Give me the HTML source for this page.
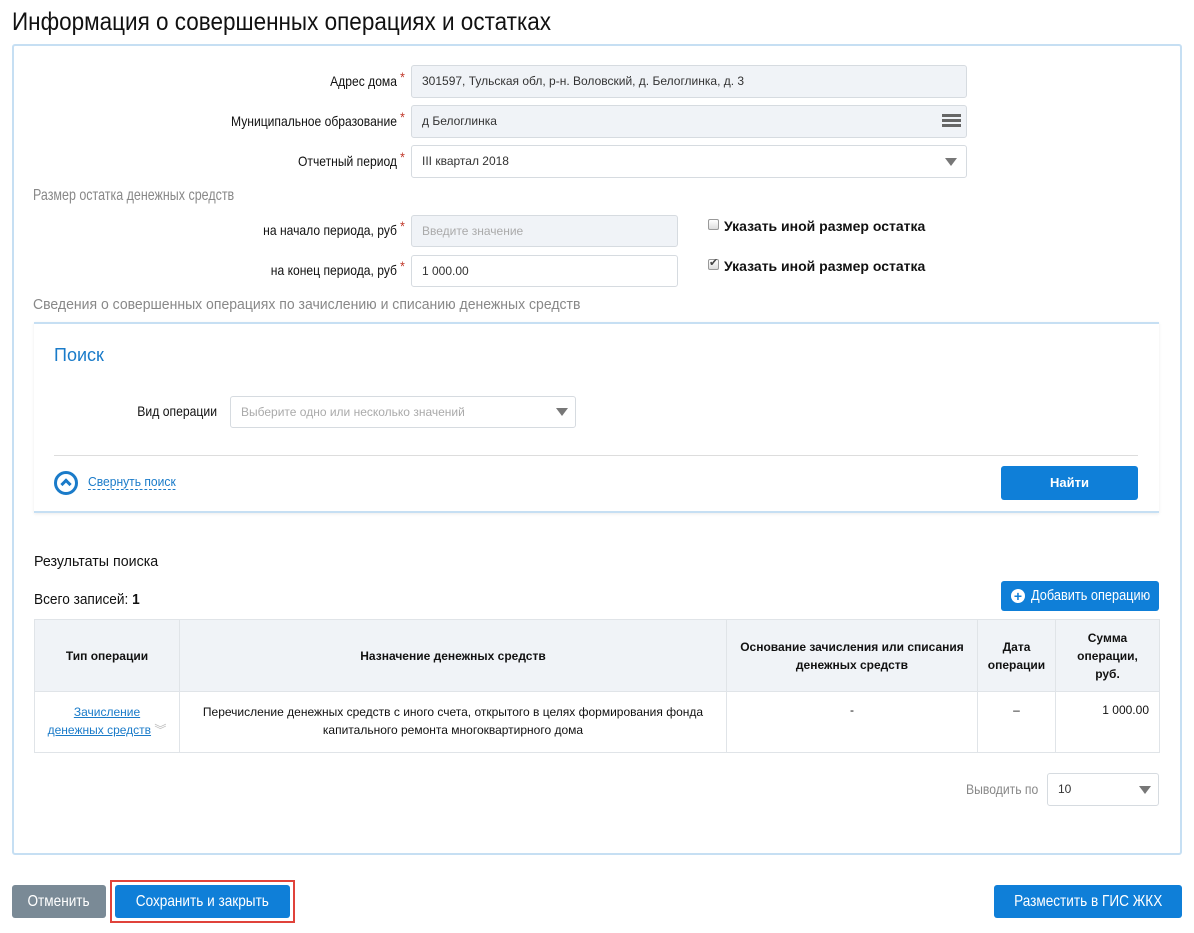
<!DOCTYPE html>
<html><head><meta charset="utf-8"><style>
*{box-sizing:border-box;margin:0;padding:0}
body{width:1194px;height:933px;background:#fff;position:relative;font-family:"Liberation Sans",sans-serif;color:#111;overflow:hidden}
.a{position:absolute;white-space:nowrap}
.lbl{position:absolute;text-align:right;font-size:14px;width:380px;transform:scaleX(.865);transform-origin:right center}
.lbl b{color:#c0392b;font-weight:normal;position:absolute;right:-9px;top:-4px}
.inp{position:absolute;border:1px solid #d6dbe0;border-radius:3px;font-size:12px;padding-left:10px;line-height:30px;color:#333}
.g{background:#f0f3f7}
.tri{position:absolute;width:0;height:0;border-left:6px solid transparent;border-right:6px solid transparent;border-top:8px solid #777}
.btn{position:absolute;background:#0f7fd8;color:#fff;border-radius:3px;text-align:center;font-size:14px;white-space:nowrap}
.cb{position:absolute;width:11px;height:11px;border:1px solid #999;border-radius:2px;background:linear-gradient(#fff,#ddd)}
.sx{display:inline-block;transform:scaleX(.85);font-size:16px}
td,th{border:1px solid #e0e4e8;font-size:12px;text-align:center;vertical-align:top}
th{background:#f0f3f7;vertical-align:middle;font-weight:bold}
</style></head><body>
<div class="a" style="left:12px;top:8px;font-size:25px;color:#111;transform:scaleX(.9);transform-origin:left">Информация о совершенных операциях и остатках</div>
<div class="a" style="left:12px;top:44px;width:1170px;height:811px;border:2px solid #c6dff3;border-radius:3px"></div>

<div class="lbl" style="left:17px;top:73px">Адрес дома<b>*</b></div>
<div class="inp g" style="left:411px;top:65px;width:556px;height:33px">301597, Тульская обл, р-н. Воловский, д. Белоглинка, д. 3</div>
<div class="lbl" style="left:17px;top:113px">Муниципальное образование<b>*</b></div>
<div class="inp g" style="left:411px;top:105px;width:556px;height:33px">д Белоглинка</div>
<div class="a" style="left:942px;top:114px;width:19px;height:3px;background:#666;box-shadow:0 5px 0 #666,0 10px 0 #666"></div>
<div class="lbl" style="left:17px;top:153px">Отчетный период<b>*</b></div>
<div class="inp" style="left:411px;top:145px;width:556px;height:33px">III квартал 2018</div>
<div class="tri" style="left:945px;top:158px"></div>

<div class="a" style="left:33px;top:187px;font-size:16px;color:#888;transform:scaleX(.78);transform-origin:left">Размер остатка денежных средств</div>
<div class="lbl" style="left:17px;top:222px">на начало периода, руб<b>*</b></div>
<div class="inp g" style="left:411px;top:215px;width:267px;height:32px;color:#aaa">Введите значение</div>
<div class="lbl" style="left:17px;top:262px">на конец периода, руб<b>*</b></div>
<div class="inp" style="left:411px;top:255px;width:267px;height:32px">1 000.00</div>
<div class="cb" style="left:708px;top:219px"></div>
<div class="a" style="left:724px;top:218px;font-size:14px;font-weight:bold">Указать иной размер остатка</div>
<div class="cb" style="left:708px;top:259px"></div>
<div class="a" style="left:709px;top:256px;font-size:11px;color:#444">✔</div>
<div class="a" style="left:724px;top:258px;font-size:14px;font-weight:bold">Указать иной размер остатка</div>
<div class="a" style="left:33px;top:296px;font-size:15px;color:#888;transform:scaleX(.935);transform-origin:left">Сведения о совершенных операциях по зачислению и списанию денежных средств</div>

<div class="a" style="left:34px;top:322px;width:1125px;height:191px;border-top:2px solid #c6dff3;border-bottom:2px solid #c6dff3;box-shadow:0 1px 3px rgba(0,0,0,.08)"></div>
<div class="a" style="left:54px;top:345px;font-size:18px;color:#1a7bc9">Поиск</div>
<div class="a" style="left:100px;top:403px;width:117px;text-align:right;font-size:14px;transform:scaleX(.87);transform-origin:right">Вид операции</div>
<div class="inp" style="left:230px;top:396px;width:346px;height:32px;color:#aaa">Выберите одно или несколько значений</div>
<div class="tri" style="left:556px;top:408px"></div>
<div class="a" style="left:54px;top:455px;width:1084px;height:1px;background:#ddd"></div>
<div class="a" style="left:54px;top:471px;width:24px;height:24px;border:3px solid #1a7bc9;border-radius:50%"></div>
<div class="a" style="left:62px;top:480px;width:8px;height:8px;border-left:3px solid #1a7bc9;border-top:3px solid #1a7bc9;transform:rotate(45deg)"></div>
<div class="a" style="left:88px;top:474px;font-size:13px;color:#1a7bc9;border-bottom:1px dashed #1a7bc9;line-height:15px;transform:scaleX(.93);transform-origin:left">Свернуть поиск</div>
<div class="btn" style="left:1001px;top:466px;width:137px;height:34px;line-height:34px;font-weight:bold;font-size:13px">Найти</div>

<div class="a" style="left:34px;top:553px;font-size:15px;transform:scaleX(.95);transform-origin:left">Результаты поиска</div>
<div class="a" style="left:34px;top:591px;font-size:15px;transform:scaleX(.91);transform-origin:left">Всего записей: <b>1</b></div>
<div class="btn" style="left:1001px;top:581px;width:158px;height:30px"></div>
<div class="a" style="left:1031px;top:587px;font-size:15px;color:#fff;transform:scaleX(.85);transform-origin:left">Добавить операцию</div>
<div class="a" style="left:1011px;top:589px;width:14px;height:14px;border-radius:50%;background:#fff;color:#0f7fd8;font:bold 14px/14px 'Liberation Sans';text-align:center">+</div>

<table class="a" style="left:34px;top:619px;width:1126px;border-collapse:collapse;white-space:normal">
<tr style="height:72px"><th style="width:145px">Тип операции</th><th style="width:547px">Назначение денежных средств</th><th style="width:251px;line-height:18px">Основание зачисления или списания<br>денежных средств</th><th style="width:78px;line-height:18px">Дата<br>операции</th><th style="line-height:18px">Сумма<br>операции,<br>руб.</th></tr>
<tr style="height:61px"><td style="padding-top:11px;line-height:18px"><span style="color:#1a7bc9;text-decoration:underline">Зачисление<br>денежных средств</span> <span style="color:#bbb">︾</span></td><td style="padding-top:11px;line-height:18px">Перечисление денежных средств с иного счета, открытого в целях формирования фонда<br>капитального ремонта многоквартирного дома</td><td style="padding-top:11px">-</td><td style="padding-top:11px">–</td><td style="padding-top:11px;text-align:right;padding-right:10px">1 000.00</td></tr>
</table>

<div class="a" style="left:966px;top:781px;font-size:14px;color:#888;transform:scaleX(.87);transform-origin:left">Выводить по</div>
<div class="inp" style="left:1047px;top:773px;width:112px;height:33px">10</div>
<div class="tri" style="left:1139px;top:786px"></div>

<div class="a" style="left:110px;top:880px;width:185px;height:43px;border:2px solid #e0433b"></div>
<div class="btn" style="left:12px;top:885px;width:94px;height:33px;line-height:33px;background:#7a8a96"><span class="sx">Отменить</span></div>
<div class="btn" style="left:115px;top:885px;width:175px;height:33px;line-height:33px"><span class="sx">Сохранить и закрыть</span></div>
<div class="btn" style="left:994px;top:885px;width:188px;height:33px;line-height:33px"><span class="sx">Разместить в ГИС ЖКХ</span></div>
</body></html>
